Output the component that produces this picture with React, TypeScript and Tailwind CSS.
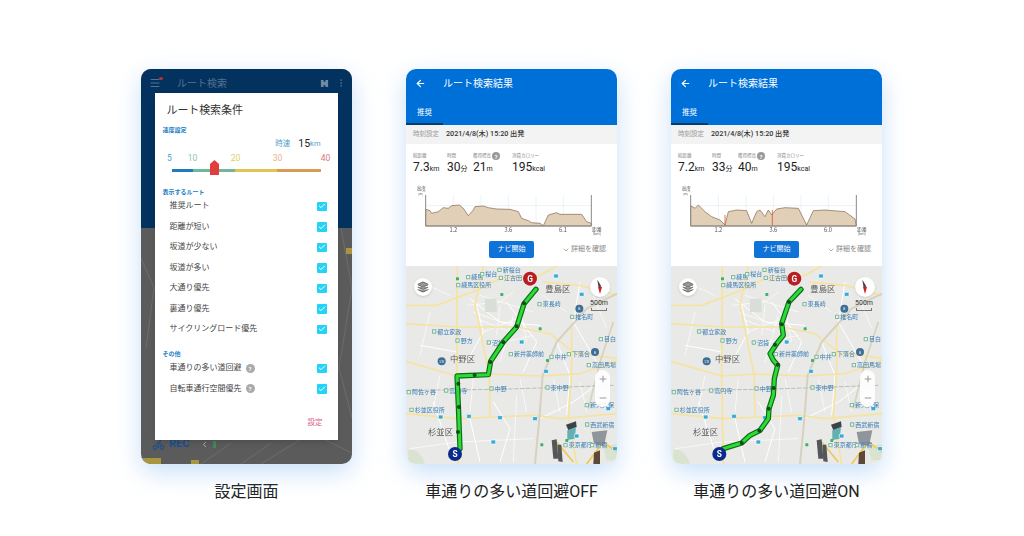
import React from "react";
import { ArrowLeft, Bike, Check, ChevronDown, ChevronLeft, EllipsisVertical, Layers, Menu, Minus, Plus } from "lucide-react";

type Label = { x: number; y: number; t: string; dark?: boolean };

const labels: Label[] = [
  { x: 198, y: 52, t: "練馬" },
  { x: 168, y: 76, t: "練馬区役所" },
  { x: 240, y: 43, t: "桜台" },
  { x: 292, y: 30, t: "新桜台" },
  { x: 296, y: 54, t: "江古田" },
  { x: 412, y: 133, t: "東長崎" },
  { x: 510, y: 171, t: "椎名町" },
  { x: 96, y: 215, t: "都立家政" },
  { x: 166, y: 242, t: "野方" },
  { x: 260, y: 248, t: "沼袋" },
  { x: 326, y: 283, t: "新井薬師前" },
  { x: 448, y: 291, t: "中井" },
  { x: 500, y: 283, t: "下落合" },
  { x: 560, y: 316, t: "高田馬場" },
  { x: 596, y: 238, t: "目白" },
  { x: 20, y: 397, t: "阿佐ヶ谷" },
  { x: 132, y: 392, t: "高円寺" },
  { x: 268, y: 386, t: "中野" },
  { x: 436, y: 383, t: "東中野" },
  { x: 554, y: 436, t: "新大久保" },
  { x: 28, y: 450, t: "杉並区役所" },
  { x: 555, y: 494, t: "西武新宿" },
  { x: 490, y: 556, t: "東京都庁" },
  { x: 570, y: 556, t: "新宿" },
];

const wards: Label[] = [
  { x: 436, y: 91, t: "豊島区", dark: true },
  { x: 150, y: 301, t: "中野区", dark: true },
  { x: 84, y: 519, t: "杉並区", dark: true },
];

const subwayMarks = [
  [468, 42], [545, 97], [122, 465], [207, 463], [300, 467], [405, 470],
  [438, 328], [280, 540], [530, 522], [625, 440], [365, 240], [645, 560],
];
const greenDots = [[305, 97], [420, 200], [442, 295], [425, 548], [172, 50], [500, 535]];
const hexMarks: [number, number, string][] = [
  [125, 298, "20"],
  [585, 270, "8"],
  [538, 140, "8"],
];

const RouteMap = ({ route, joints, s, g }: { route: string; joints: number[][]; s: [number, number]; g: [number, number] }) => (
  <div className="relative h-[198px] shrink-0 overflow-hidden bg-[#e9e9e7]">
    <svg viewBox="18 12 633 594" className="block h-full w-full blur-[0.35px]">
      <g fill="none" stroke="#ffffff" strokeWidth="3">
        <path d="M210 110 L300 180 L420 190 M230 130 L250 210 L200 300 M320 120 L410 240 L370 330 M60 250 L170 270 M280 420 L330 500 L300 600 M420 470 L520 420 L600 360 M100 420 L160 600 M210 470 L240 600 M470 240 L510 340 L500 460 M540 60 L520 180 L590 300" />
        <path d="M240 100 L400 150 M220 150 L390 210 M340 160 L300 300 M30 560 L170 540 L400 530 M350 400 L340 600 M200 130 L300 120 L340 90 M230 170 L330 210 M250 210 L350 170 M300 130 L290 220 M360 130 L380 240 M270 250 L400 220 M60 60 L150 100 M90 150 L60 280 M120 340 L100 440 M220 350 L210 450 M360 350 L380 450 M460 350 L480 450 M540 360 L560 450 M430 100 L500 150 M580 100 L620 200" strokeWidth="2" />
      </g>
      <path d="M255 110 h35 v40 h-35 Z" fill="#d9dfd8" />
      <path d="M25 565 q30 -10 50 40 h-50 Z M610 555 l40 -10 v50 h-30 Z" fill="#d8e4cf" />
      <g fill="none" stroke="#f6e3a0" strokeWidth="5">
        <path d="M172 12 L170 340 L175 606" />
        <path d="M18 298 L170 342 L270 336 L420 342 L540 335 L651 296" />
        <path d="M18 455 L170 470 L400 460 L480 470 L651 455" />
        <path d="M18 130 L110 130 L230 85 L300 50 L420 40 L470 12" />
        <path d="M18 185 L170 195 L350 195 L450 215 L520 270 L651 290" />
        <path d="M430 60 L540 70 L651 100" />
        <path d="M515 190 L515 330 L505 460 L530 606" />
        <path d="M250 12 L225 130 L268 340 L270 460" />
        <path d="M470 540 L520 600 M560 606 L610 540 L651 570" stroke="#f2c84f" />
      </g>
      <g fill="none">
        <path d="M405 606 L418 470 L428 340 L470 240 L560 140 L651 95" stroke="#d6d2bd" strokeWidth="6" />
        <path d="M565 440 L600 300 L640 180" stroke="#d6d2bd" strokeWidth="5" />
        <path d="M18 385 L300 382 L640 370" stroke="#bdbdb8" strokeWidth="3" strokeDasharray="14 4" />
      </g>
      <g>
        <path d="M498 488 L528 478 L530 495 L505 505 Z" fill="#3d4247" />
        <path d="M502 505 L528 495 L524 530 L502 534 Z" fill="#63b0b0" />
        <path d="M575 510 L622 505 L612 552 L582 545 Z" fill="#8f959b" />
        <path d="M455 535 L470 532 L475 590 L460 590 Z" fill="#55565a" />
        <path d="M472 548 L484 548 L488 600 L475 598 Z" fill="#55565a" />
        <path d="M582 572 L600 565 L600 606 L580 606 Z" fill="#5b4a3a" />
      </g>
      {subwayMarks.map(([x, y]) => (
        <rect key={`${x}-${y}`} x={x - 7} y={y - 6} width="14" height="12" rx="2" fill="#35a9d8" stroke="#fff" strokeWidth="2" />
      ))}
      {greenDots.map(([x, y]) => (
        <rect key={`${x}-${y}`} x={x - 4} y={y - 4} width="9" height="9" rx="2" fill="#3db26b" />
      ))}
      <g fontFamily="Roboto, sans-serif">
        {hexMarks.map(([x, y, n]) => (
          <g key={`${x}-${y}`}>
            <circle cx={x} cy={y} r="12" fill="#3f6f96" />
            <text x={x} y={y + 5} textAnchor="middle" fontSize="13" fill="#dfe9f2">
              {n}
            </text>
          </g>
        ))}
      </g>
      <g fontFamily="'Noto Sans CJK JP', sans-serif">
        {labels.map((l) => (
          <g key={l.t}>
            <rect x={l.x} y={l.y - 13} width="13" height="13" rx="2" fill="#7fb79a" />
            <rect x={l.x + 3} y={l.y - 10} width="7" height="7" fill="#e9f3ee" />
            <text x={l.x + 16} y={l.y} fontSize="18" fill="#3a7db5">
              {l.t}
            </text>
          </g>
        ))}
        {wards.map((l) => (
          <text key={l.t} x={l.x} y={l.y} fontSize="25" fill="#5a5a5a">
            {l.t}
          </text>
        ))}
      </g>
      <path d={route} fill="none" stroke="#0f6a18" strokeWidth="16" strokeLinejoin="round" strokeLinecap="round" />
      <path d={route} fill="none" stroke="#2bdc36" strokeWidth="9" strokeLinejoin="round" strokeLinecap="round" />
      {joints.map(([x, y]) => (
        <circle key={`${x}-${y}`} cx={x} cy={y} r="6" fill="#0f4a16" />
      ))}
      <circle cx={g[0]} cy={g[1]} r="21" fill="#b81f25" />
      <text x={g[0]} y={g[1] + 9} textAnchor="middle" fontSize="25" fontWeight="700" fill="#ffffff" fontFamily="Roboto, sans-serif">
        G
      </text>
      <circle cx={s[0]} cy={s[1]} r="21" fill="#0a2a8c" />
      <text x={s[0]} y={s[1] + 9} textAnchor="middle" fontSize="25" fontWeight="700" fill="#ffffff" fontFamily="Roboto, sans-serif">
        S
      </text>
    </svg>
    {/* map controls */}
    <div className="absolute left-[8px] top-[12px] flex h-[18px] w-[18px] items-center justify-center rounded-full bg-white shadow">
      <Layers size={12} strokeWidth={1.5} className="text-[#555]" fill="#999" />
    </div>
    <div className="absolute left-[184px] top-[11px] flex h-[20px] w-[20px] items-center justify-center rounded-full bg-white shadow">
      <svg viewBox="0 0 20 20" className="h-[20px] w-[20px]">
        <path d="M10 2 L11.5 10 H8.5 Z" fill="#444" transform="rotate(-20 10 10)" />
        <path d="M10 17 L12 10 H8 Z" fill="#d21f26" />
      </svg>
    </div>
    <div className="absolute left-[178px] top-[33px] w-[30px] text-center text-[7px] leading-[9px] text-[#333]">500m</div>
    <div className="absolute left-[185px] top-[42px] h-[3px] w-[16px] border-x border-b border-[#777]" />
    <div className="absolute left-[189px] top-[104px] flex h-[37px] w-[15px] flex-col items-center justify-around rounded-full bg-white/90 text-[#888]">
      <Plus size={10} />
      <Minus size={10} />
    </div>
  </div>
);

const Stat = ({ label, value, unit, w, help }: { label: string; value: string; unit: string; w: string; help?: boolean }) => (
  <div className={w}>
    <div className="flex h-[10px] items-center gap-[1px] whitespace-nowrap text-[4.5px] text-[#888]">
      {label}
      {help && <span className="flex h-[8px] w-[8px] items-center justify-center rounded-full bg-[#999] text-[6px] font-bold text-white">?</span>}
    </div>
    <div className="h-[12px] whitespace-nowrap text-[12px] leading-[12px] text-[#222]">
      {value}
      <span className="text-[7px]">{unit}</span>
    </div>
  </div>
);

const ElevationChart = ({ profile, ticks, red }: { profile: string; ticks: string[]; red?: string }) => (
  <svg viewBox="18 360 633 174" className="mt-[7px] block h-[58px] w-full shrink-0 blur-[0.2px]">
    <g stroke="#d7e6ef" strokeWidth="1.5" fill="none">
      <path d="M77 437 H574 M160 405 V498 M243 405 V498 M325 405 V498 M408 405 V498 M490 405 V498" />
    </g>
    <path d={profile} fill="#e2cfb8" stroke="#7d6249" strokeWidth="2" />
    {red && <path d={red} fill="none" stroke="#e4572e" strokeWidth="2.5" />}
    <path d="M77 405 V498 H574 V405" fill="none" stroke="#8a8a8a" strokeWidth="3" />
    <g fontFamily="'Noto Sans CJK JP', sans-serif" fill="#555">
      <text x="50" y="391" fontSize="14">高度</text>
      <text x="55" y="404" fontSize="9">(m)</text>
      <text x="160" y="517" fontSize="17" textAnchor="middle">{ticks[0]}</text>
      <text x="325" y="517" fontSize="17" textAnchor="middle">{ticks[1]}</text>
      <text x="489" y="517" fontSize="17" textAnchor="middle">{ticks[2]}</text>
      <text x="577" y="512" fontSize="14">距離</text>
      <text x="579" y="526" fontSize="11">(km)</text>
    </g>
  </svg>
);

type ResultProps = {
  stats: { dist: string; time: string; climb: string };
  profile: string;
  red?: string;
  ticks: string[];
  route: string;
  joints: number[][];
  s: [number, number];
  g: [number, number];
};

const ResultPhone = ({ stats, profile, red, ticks, route, joints, s, g }: ResultProps) => (
  <div className="flex h-[395px] w-[211px] flex-col overflow-hidden rounded-[10px] bg-white shadow-[0_8px_24px_rgba(110,170,240,0.38)]">
    <div className="h-[56px] shrink-0 bg-[#0070d9] text-white">
      <div className="flex h-[28px] items-center">
        <ArrowLeft size={11} strokeWidth={2.5} className="ml-[9px]" />
        <span className="ml-[17px] text-[10px]">ルート検索結果</span>
      </div>
      <div className="h-[28px] pt-[7px]">
        <div className="flex h-[21px] w-[37px] items-start justify-center border-b-[2px] border-[#0b3a66] pt-[3px] text-[7.5px]">推奨</div>
      </div>
    </div>
    <div className="flex h-[19px] shrink-0 items-center bg-[#f3f3f3] pl-[7px] text-[6.5px]">
      <span className="w-[33px] text-[#999]">時刻設定</span>
      <span className="text-[7.2px] font-medium text-[#333]">2021/4/8(木) 15:20 出発</span>
    </div>
    <div className="flex h-[29px] shrink-0 pl-[7px] pt-[7px]">
      <Stat label="総距離" value={stats.dist} unit="km" w="w-[34px]" />
      <Stat label="時間" value={stats.time} unit="分" w="w-[26px]" />
      <Stat label="獲得標高" value={stats.climb} unit="m" w="w-[39px]" help />
      <Stat label="消費カロリー" value="195" unit="kcal" w="w-[50px]" />
    </div>
    <ElevationChart profile={profile} ticks={ticks} red={red} />
    <div className="mt-[3px] flex h-[17px] shrink-0 items-center pl-[83px]">
      <div className="flex h-[17px] w-[45px] items-center justify-center rounded-[2px] bg-[#0f72d8] text-[7px] text-white">ナビ開始</div>
      <ChevronDown size={8} className="ml-[28px] text-[#888]" />
      <span className="ml-[1px] whitespace-nowrap text-[7px] text-[#888]">詳細を確認</span>
    </div>
    <div className="mt-[8px] shrink-0">
      <RouteMap route={route} joints={joints} s={s} g={g} />
    </div>
  </div>
);

const CheckRow = ({ label, help }: { label: string; help?: boolean }) => (
  <div className="flex h-[20.5px] items-center pl-[15px] pr-[11px] text-[8px] text-[#444]">
    <span>{label}</span>
    {help && <span className="ml-[4px] flex h-[9px] w-[9px] items-center justify-center rounded-full bg-[#aaa] text-[6px] font-bold text-white">?</span>}
    <span className="ml-auto flex h-[9.5px] w-[9.5px] items-center justify-center rounded-[1px] bg-[#25d3f6]">
      <Check size={8} strokeWidth={3} className="text-white" />
    </span>
  </div>
);

const SettingsPhone = () => (
  <div className="relative flex h-[395px] w-[211px] flex-col overflow-hidden rounded-[10px] bg-[#5b5b5b] shadow-[0_8px_24px_rgba(110,170,240,0.38)]">
    <div className="h-[159px] shrink-0 bg-[#04325f]">
      <div className="flex h-[28px] items-center text-[#54718f]">
        <span className="relative ml-[8px]">
          <Menu size={12} />
          <span className="absolute right-[-2px] top-[0px] h-[3px] w-[4px] rounded-full bg-[#a33]" />
        </span>
        <span className="ml-[16px] text-[10px]">ルート検索</span>
        <svg viewBox="0 0 10 10" className="ml-auto h-[9px] w-[9px]">
          <path d="M1 1 H4 V9 H1 Z M6 1 H9 V9 H6 Z M4 3 H6 V7 H4 Z" fill="#6f8aa5" />
        </svg>
        <EllipsisVertical size={10} className="ml-[7px] mr-[6px]" />
      </div>
    </div>
    <svg viewBox="0 0 211 236" className="block h-[236px] w-full shrink-0">
      <path d="M0 30 L13 60 L5 120 M200 0 L211 60 L198 140 L211 190 M120 236 L170 205 L211 225 M60 236 L90 215 M100 236 L130 215" fill="none" stroke="#6d6d6d" strokeWidth="1" />
      <path d="M0 236 H20 V230 H0 Z M50 236 H58 V232 H50 Z M205 20 H211 V26 H205 Z" fill="#a8963f" />
    </svg>
    <div className="absolute left-[11px] top-[367px] flex items-center text-[#1c4f8f]">
      <Bike size={13} />
      <span className="ml-[4px] text-[11px] font-bold">REC</span>
      <ChevronLeft size={9} className="ml-[11px] text-[#ccc]" />
      <span className="ml-[4px] h-[7px] w-[3px] bg-[#3f8a5a]" />
    </div>

    {/* dialog */}
    <div className="absolute left-[13.5px] top-[24px] flex h-[347px] w-[183px] flex-col bg-white shadow-md">
      <div className="pl-[12px] pt-[10px] text-[11px] leading-[16px] tracking-[-0.1px] text-[#333]">ルート検索条件</div>
      <div className="mt-[7px] pl-[8px] text-[6px] font-bold leading-[8px] text-[#1a80c4]">速度設定</div>
      <div className="mt-[4px] flex h-[12px] items-center justify-end pr-[17px]">
        <span className="mr-[8px] text-[7.5px] text-[#4e9fc8]">時速</span>
        <span className="text-[10.5px] text-[#222]">15</span>
        <span className="text-[7.5px] text-[#4e9fc8]">km</span>
      </div>
      <div className="mt-[3px] flex h-[10px] items-center pl-[10px] text-center text-[8.5px]">
        <span className="w-[10px] text-[#4aa3c8]">5</span>
        <span className="w-[36px] text-[#8cc4a8]">10</span>
        <span className="w-[50px] text-[#d8cf6a]">20</span>
        <span className="w-[34px] text-[#e0b68a]">30</span>
        <span className="ml-[19px] w-[24px] text-[#d47a7a]">40</span>
      </div>
      <div className="relative mx-[17px] flex h-[14px] items-center">
        <div className="h-[3px] w-[21.5px] bg-[#1f7dbb]" />
        <div className="h-[3px] w-[42.5px] bg-[#6fb69a]" />
        <div className="h-[3px] w-[42.5px] bg-[#e3c352]" />
        <div className="h-[3px] w-[43.5px] bg-[#d99a55]" />
        <svg viewBox="0 0 9 15" className="absolute left-[38px] top-[-3px] h-[15px] w-[9px]">
          <path d="M4.5 0 L9 4 V15 H0 V4 Z" fill="#e23d3d" />
        </svg>
      </div>
      <div className="mt-[11px] pl-[8px] text-[6px] font-bold leading-[8px] text-[#1a80c4]">表示するルート</div>
      <CheckRow label="推奨ルート" />
      <CheckRow label="距離が短い" />
      <CheckRow label="坂道が少ない" />
      <CheckRow label="坂道が多い" />
      <CheckRow label="大通り優先" />
      <CheckRow label="裏通り優先" />
      <CheckRow label="サイクリングロード優先" />
      <div className="mt-[10.5px] pl-[8px] text-[6px] font-bold leading-[8px] text-[#1a80c4]">その他</div>
      <CheckRow label="車通りの多い道回避" help />
      <CheckRow label="自転車通行空間優先" help />
      <div className="mt-auto pb-[11px] pr-[15px] text-right text-[7.5px] leading-[12px] text-[#d9628f]">設定</div>
    </div>
  </div>
);

const Column = ({ caption, children }: { caption: string; children: React.ReactNode }) => (
  <div className="flex w-[211px] flex-col items-center">
    {children}
    <div className="mt-[18px] whitespace-nowrap text-[16px] leading-[20px] text-[#222]">{caption}</div>
  </div>
);

export default function App() {
  return (
    <div className="flex h-[536px] w-[1024px] gap-[54px] overflow-hidden bg-white pl-[141px] pt-[69px] font-['Roboto','Noto_Sans_CJK_JP',sans-serif]">
      <Column caption="設定画面">
        <SettingsPhone />
      </Column>
      <Column caption="車通りの多い道回避OFF">
        <ResultPhone
          stats={{ dist: "7.3", time: "30", climb: "21" }}
          ticks={["1.2", "3.6", "6.1"]}
          profile="M77 448 L90 452 L95 460 L115 455 L130 443 L145 445 L155 437 L178 435 L190 445 L205 467 L220 450 L225 440 L250 438 L265 443 L290 447 L330 448 L355 455 L365 475 L385 482 L395 488 L420 490 L430 497 L445 465 L470 458 L480 463 L545 463 L560 485 L574 490 L574 498 L77 498 Z"
          route="M180 560 L175 430 L171 342 L265 338 L272 298 L310 240 L350 195 L372 125 L408 82"
          joints={[[174, 510], [177, 435], [175, 365], [224, 339], [271, 300], [310, 241], [350, 193], [372, 124]]}
          s={[165, 576]}
          g={[390, 50]}
        />
      </Column>
      <Column caption="車通りの多い道回避ON">
        <ResultPhone
          stats={{ dist: "7.2", time: "33", climb: "40" }}
          ticks={["1.2", "3.6", "6.0"]}
          profile="M77 437 L90 445 L100 435 L120 455 L140 470 L165 480 L180 495 L190 455 L215 450 L245 452 L260 490 L275 455 L285 450 L300 470 L310 450 L320 465 L335 447 L360 443 L400 445 L425 495 L445 452 L480 450 L540 455 L570 477 L574 498 L77 498 Z"
          red="M180 465 V497 M322 450 V497"
          route="M175 560 L230 543 L255 520 L285 505 L310 470 L312 440 L325 400 L328 350 L338 310 L325 295 L315 275 L335 245 L355 220 L350 185 L372 120 L408 82"
          joints={[[230, 543], [283, 506], [311, 440], [326, 378], [338, 308], [330, 248], [350, 187], [372, 120]]}
          s={[163, 576]}
          g={[388, 50]}
        />
      </Column>
    </div>
  );
}
